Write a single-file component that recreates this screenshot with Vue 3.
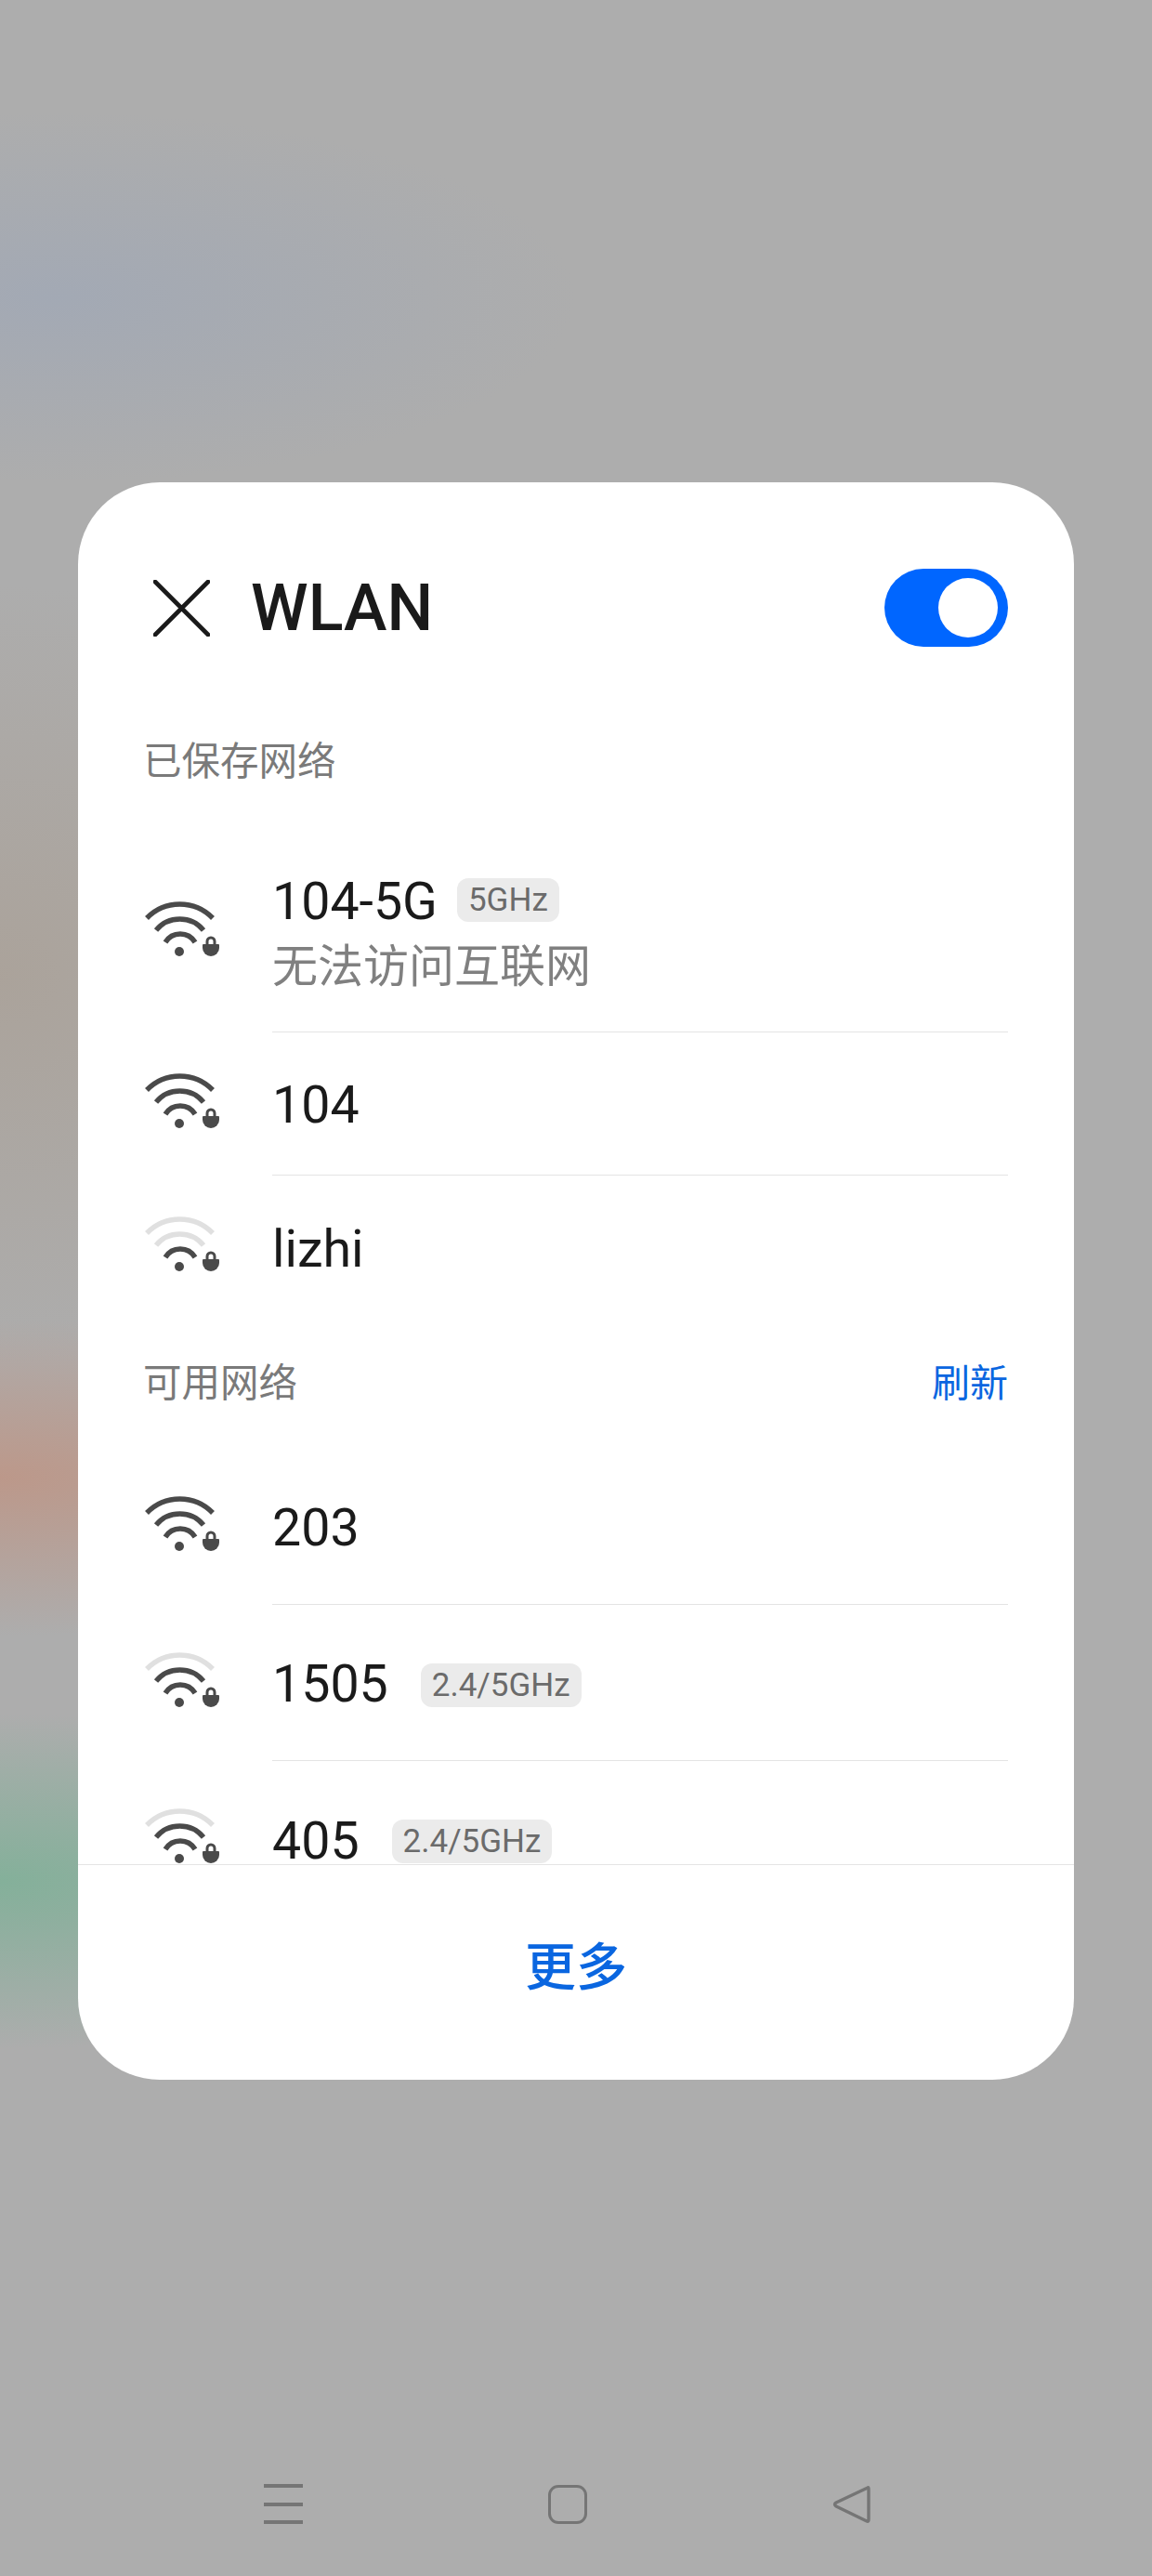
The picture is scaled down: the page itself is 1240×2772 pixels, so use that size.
<script setup>
const saved = [
  { name: '104-5G', tag: '5GHz', sub: '无法访问互联网', level: 3, cls: 'first' },
  { name: '104', level: 3 },
  { name: 'lizhi', level: 1, last: true }
];

const available = [
  { name: '203', level: 3 },
  { name: '1505', tag: '2.4/5GHz', level: 2 },
  { name: '405', tag: '2.4/5GHz', level: 2, last: true }
];

const arcColor = (level, min) => (level >= min ? '#4a4a4a' : '#e0e0e0');
</script>

<template>
  <div class="screen">
    <div class="card">
      <div class="head">
        <svg class="close" width="61" height="61" viewBox="0 0 61 61">
          <path d="M2 2 L59 59 M59 2 L2 59" stroke="#1a1a1a" stroke-width="4.6" stroke-linecap="round" fill="none" />
        </svg>
        <span class="title">WLAN</span>
        <div class="toggle"><div class="knob"></div></div>
      </div>

      <div class="list">
        <div class="label label-saved"><span>已保存网络</span></div>
        <div v-for="n in saved" :key="n.name" class="row" :class="n.cls">
          <svg class="wifi" width="84" height="76" viewBox="0 0 84 76">
            <g fill="none" stroke-width="5.5">
              <path d="M3 22 A49.5 49.5 0 0 1 74 22" :stroke="arcColor(n.level, 3)" />
              <path d="M13 35 A33 33 0 0 1 64 35" :stroke="arcColor(n.level, 2)" />
              <path d="M23 48 A18.7 18.7 0 0 1 55 48" :stroke="arcColor(n.level, 1)" />
            </g>
            <circle cx="38" cy="58" r="5" fill="#4a4a4a" />
            <path d="M68 52 V47 a4 4 0 0 1 8 0 V52" stroke="#4a4a4a" stroke-width="3" fill="none" />
            <path d="M63 51 Q63 50 64 50 H80 Q81 50 81 51 V54 a9 9 0 0 1 -18 0 Z" fill="#4a4a4a" />
          </svg>
          <div class="row-body" :class="{ 'no-line': n.last }">
            <div class="name-line">
              <span class="name">{{ n.name }}</span>
              <span v-if="n.tag" class="tag tag-near">{{ n.tag }}</span>
            </div>
            <div v-if="n.sub" class="sub">{{ n.sub }}</div>
          </div>
        </div>

        <div class="label label-avail"><span>可用网络</span><span class="refresh">刷新</span></div>
        <div v-for="n in available" :key="n.name" class="row row-tall">
          <svg class="wifi" width="84" height="76" viewBox="0 0 84 76">
            <g fill="none" stroke-width="5.5">
              <path d="M3 22 A49.5 49.5 0 0 1 74 22" :stroke="arcColor(n.level, 3)" />
              <path d="M13 35 A33 33 0 0 1 64 35" :stroke="arcColor(n.level, 2)" />
              <path d="M23 48 A18.7 18.7 0 0 1 55 48" :stroke="arcColor(n.level, 1)" />
            </g>
            <circle cx="38" cy="58" r="5" fill="#4a4a4a" />
            <path d="M68 52 V47 a4 4 0 0 1 8 0 V52" stroke="#4a4a4a" stroke-width="3" fill="none" />
            <path d="M63 51 Q63 50 64 50 H80 Q81 50 81 51 V54 a9 9 0 0 1 -18 0 Z" fill="#4a4a4a" />
          </svg>
          <div class="row-body" :class="{ 'no-line': n.last }">
            <div class="name-line">
              <span class="name">{{ n.name }}</span>
              <span v-if="n.tag" class="tag">{{ n.tag }}</span>
            </div>
          </div>
        </div>
      </div>

      <div class="foot">更多</div>
    </div>

    <div class="nav">
      <div class="nav-menu"><i></i><i></i><i></i></div>
      <div class="nav-home"></div>
      <svg class="nav-back" width="42" height="42" viewBox="0 0 42 42">
        <path d="M38 3 Q39 2 39 5 V37 Q39 40 37 39 L4 23 Q1 21 4 19 Z" fill="none" stroke="#757575" stroke-width="3.4" stroke-linejoin="round" />
      </svg>
    </div>
  </div>
</template>

<style>
html, body {
  margin: 0;
  background: #adadad;
}
</style>

<style scoped>
.screen {
  width: 1240px;
  height: 2772px;
  box-sizing: border-box;
  padding-top: 519px;
  overflow: hidden;
  font-family: Roboto, "Noto Sans CJK SC", sans-serif;
  background:
    radial-gradient(ellipse 600px 180px at 0 2025px, rgba(132, 176, 154, 1), rgba(132, 176, 154, 0)),
    radial-gradient(ellipse 600px 170px at 0 1590px, rgba(188, 152, 138, 1), rgba(188, 152, 138, 0)),
    radial-gradient(ellipse 500px 420px at 0 1050px, rgba(170, 160, 150, 0.8), rgba(170, 160, 150, 0)),
    radial-gradient(ellipse 560px 200px at 60px 320px, rgba(160, 168, 182, 0.8), rgba(160, 168, 182, 0)),
    #adadad;
}

.card {
  width: 1072px;
  height: 1719px;
  margin-left: 84px;
  background: #fff;
  border-radius: 88px;
  display: flex;
  flex-direction: column;
  overflow: hidden;
}

.head {
  display: flex;
  align-items: center;
  height: 84px;
  padding: 93px 71px 52px 81px;
  flex-shrink: 0;
}

.close {
  flex-shrink: 0;
  margin-right: 44px;
}

.title {
  font-size: 70px;
  font-weight: 500;
  color: #1a1a1a;
  flex: 1;
}

.toggle {
  width: 133px;
  height: 84px;
  border-radius: 42px;
  background: #0066ff;
  position: relative;
}

.knob {
  position: absolute;
  top: 10px;
  right: 11px;
  width: 64px;
  height: 64px;
  border-radius: 50%;
  background: #fff;
}

.list {
  flex: 1;
  min-height: 0;
  overflow: hidden;
}

.label {
  height: 140px;
  box-sizing: border-box;
  padding: 0 71px 0 70px;
  display: flex;
  align-items: center;
  justify-content: space-between;
  font-size: 41.5px;
  color: #7a7a7a;
}

.label-saved {
  height: 147px;
  padding-bottom: 11px;
}

.label-avail {
  padding-bottom: 9px;
}

.refresh {
  font-size: 41px;
  color: #0a66e0;
}

.row {
  display: flex;
  align-items: stretch;
  height: 154px;
  padding-left: 71px;
}

.row.first {
  height: 216px;
}

.row-tall {
  height: 168px;
}

.wifi {
  flex-shrink: 0;
  align-self: center;
  margin-right: 54px;
  position: relative;
  top: 1px;
}

.row-body {
  flex: 1;
  margin-right: 71px;
  padding-top: 5px;
  box-sizing: border-box;
  border-bottom: 1px solid #e4e4e4;
  display: flex;
  flex-direction: column;
  justify-content: center;
}

.first .row-body {
  padding-top: 3px;
}

.row-body.no-line {
  border-bottom: none;
}

.name-line {
  display: flex;
  align-items: center;
}

.name {
  font-size: 55.5px;
  color: #1a1a1a;
  line-height: 70px;
}

.tag {
  margin-left: 35px;
  height: 47px;
  line-height: 47px;
  padding: 0 12px;
  border-radius: 12px;
  background: #ebebeb;
  color: #6b6b6b;
  font-size: 35px;
}

.tag-near {
  margin-left: 21px;
  margin-bottom: 4px;
}

.sub {
  font-size: 49px;
  line-height: 64px;
  color: #808080;
  margin-top: 3px;
}

.foot {
  height: 232px;
  flex-shrink: 0;
  box-sizing: border-box;
  border-top: 1px solid #e4e4e4;
  padding-bottom: 22px;
  display: flex;
  align-items: center;
  justify-content: center;
  font-size: 55px;
  font-weight: 500;
  color: #0a66e0;
}

.nav {
  display: flex;
  align-items: center;
  justify-content: space-between;
  width: 654px;
  height: 43px;
  margin: 435px 0 0 284px;
}

.nav-menu {
  width: 42px;
  height: 43px;
  display: flex;
  flex-direction: column;
  justify-content: space-between;
}

.nav-menu i {
  display: block;
  height: 4px;
  background: #757575;
}

.nav-home {
  width: 42px;
  height: 42px;
  box-sizing: border-box;
  border: 3.5px solid #757575;
  border-radius: 11px;
}
</style>
